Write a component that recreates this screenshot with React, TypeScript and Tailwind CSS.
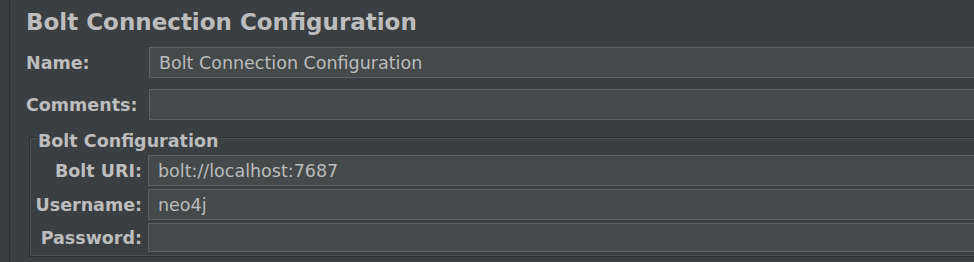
import type { ReactNode } from "react";

function Field({ value, className = "h-[31px]" }: { value?: string; className?: string }) {
  return (
    <div
      className={`flex flex-1 items-center border border-[#5e6164] bg-[#45494a] px-[9px] text-[17.5px] leading-[20px] text-[#bbbbbb] ${className}`}
    >
      {value}
    </div>
  );
}

function Row({ label, children }: { label: string; children: ReactNode }) {
  return (
    <div className="flex items-center">
      <span className="w-[123px] shrink-0 text-[17.5px] font-bold leading-[20px]">{label}</span>
      {children}
    </div>
  );
}

function GroupRow({ label, children }: { label: string; children: ReactNode }) {
  return (
    <div className="flex items-center">
      <span className="w-[112px] shrink-0 text-right text-[17.5px] font-bold leading-[20px]">
        {label}
      </span>
      <div className="ml-[6px] flex flex-1">{children}</div>
    </div>
  );
}

export default function App() {
  return (
    <div className="flex h-[262px] w-[974px] overflow-hidden bg-[#3c3f41] font-['DejaVu_Sans',sans-serif] text-[#bdbdbd]">
      <div className="w-[9px] shrink-0" />
      <div className="w-px shrink-0 bg-[#2f3133]" />
      <div className="flex w-[1000px] shrink-0 flex-col pl-[16px] pt-[9px]">
        <h1 className="h-[27px] text-[23px] font-bold leading-[27px]">
          Bolt Connection Configuration
        </h1>

        <div className="mt-[11px] flex flex-col gap-[11px]">
          <Row label="Name:">
            <Field value="Bolt Connection Configuration" />
          </Row>
          <Row label="Comments:">
            <Field />
          </Row>
        </div>

        {/* etched titled border */}
        <div className="relative ml-[3px] mt-[17px] border border-[#2d2f31] pb-[4px] pt-[17px] shadow-[inset_0_0_0_1px_#4d5052]">
          <span className="absolute left-[6px] top-[-7px] bg-[#3c3f41] px-[2px] text-[17.5px] font-bold leading-[20px]">
            Bolt Configuration
          </span>
          <div className="flex flex-col gap-[3px]">
            <GroupRow label="Bolt URI:">
              <Field value="bolt://localhost:7687" />
            </GroupRow>
            <GroupRow label="Username:">
              <Field value="neo4j" />
            </GroupRow>
            <GroupRow label="Password:">
              <Field className="h-[29px]" />
            </GroupRow>
          </div>
        </div>
      </div>
    </div>
  );
}
